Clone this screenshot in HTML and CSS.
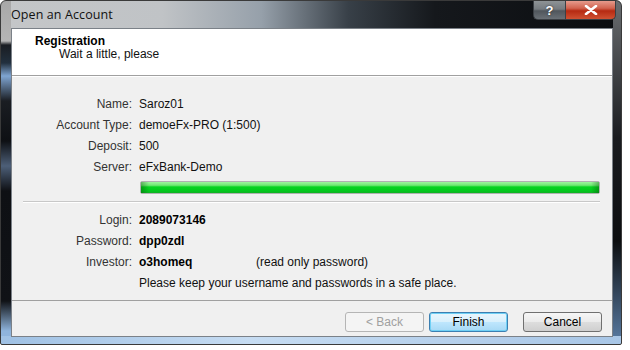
FILE: index.html
```html
<!DOCTYPE html>
<html>
	<head>
		<meta charset="UTF-8">
		<title>Open an Account</title>
		<link rel="stylesheet" href="styles.css">
	</head>
	<body>
		<div class="window">
			<div class="titlebar">
				<span class="title">Open an Account</span>
				<div class="caption-btns">
					<span class="cap help">?</span>
					<span class="cap close">
						<svg width="14" height="10" viewBox="0 0 14 10"><path d="M2 1 L12 9 M12 1 L2 9" stroke="#fff" stroke-width="2.6" stroke-linecap="round"/></svg>
					</span>
				</div>
			</div>
			<div class="client">
				<div class="header">
					<div class="head-title">Registration</div>
					<div class="head-sub">Wait a little, please</div>
				</div>
				<div class="body">
					<div class="info">
						<span class="lbl">Name:</span><span class="val">Saroz01</span>
						<span class="lbl">Account Type:</span><span class="val">demoeFx-PRO (1:500)</span>
						<span class="lbl">Deposit:</span><span class="val">500</span>
						<span class="lbl">Server:</span><span class="val">eFxBank-Demo</span>
					</div>
					<div class="progress"><div class="bar"></div></div>
					<div class="sep"></div>
					<div class="info creds">
						<span class="lbl">Login:</span><span class="val strong">2089073146</span>
						<span class="lbl">Password:</span><span class="val strong">dpp0zdl</span>
						<span class="lbl">Investor:</span><span class="val"><b class="inv">o3homeq</b>(read only password)</span>
						<span class="lbl"></span><span class="val">Please keep your username and passwords in a safe place.</span>
					</div>
				</div>
				<div class="footer">
					<button class="btn" disabled>&lt; Back</button>
					<button class="btn default">Finish</button>
					<button class="btn cancel">Cancel</button>
				</div>
			</div>
		</div>
	</body>
</html>
```

FILE: styles.css
```css
body{
	margin: 0;
	padding: 0;
	background: #fff;
	font-family: "Liberation Sans", Arial, sans-serif;
	font-size: 12px;
	color: #1e1e1e;
}

.window{
	width: 622px;
	height: 345px;
	box-sizing: border-box;
	padding: 0 8px 7px 10px;
	display: flex;
	flex-direction: column;
	border: 1px solid #3a3a3a;
	border-radius: 6px 6px 2px 2px;
	background:
		linear-gradient(90deg, #9fc1e4, #c6dcf2 40%, #a8c6e6) bottom / 100% 8px no-repeat,
		linear-gradient(180deg, #a8a8a8 0, #b5b5b5 40px, #1a1d22 44px, #22303e 62px, #7fa5d2 75px, #1a1d22 100px, #0e1014 140px, #4d5f78 165px, #0e1014 190px, #101216 300px, #8fb4dc 330px) left / 10px 100% no-repeat,
		linear-gradient(180deg, #6a6d70, #1a1c20 40%, #0c0e10 70%, #5a7da5 100%) right / 8px 100% no-repeat,
		linear-gradient(90deg, #c4c6c8 0%, #c0c3c6 26%, #96a0aa 42%, #384048 56%, #15181c 70%, #0b0d10 100%);
}

.titlebar{
	height: 27px;
	display: flex;
	justify-content: space-between;
	align-items: flex-start;
}
.title{
	font-family: "Open Sans", "Liberation Sans", sans-serif;
	font-size: 12.5px;
	color: #111;
	margin-top: 5px;
	letter-spacing: 0.1px;
}
.caption-btns{
	display: flex;
	margin-right: -3px;
}
.cap{
	height: 19px;
	display: flex;
	align-items: center;
	justify-content: center;
	border: 1px solid #3b3f44;
	border-top: 0;
	box-sizing: border-box;
}
.help{
	width: 32px;
	border-radius: 0 0 0 5px;
	border-right: 0;
	background: linear-gradient(180deg, #8e9396 0%, #767b80 45%, #50565c 55%, #6a7076 100%);
	color: #fff;
	font-weight: bold;
	font-size: 13px;
	text-shadow: 0 0 2px #222;
}
.close{
	width: 51px;
	border-radius: 0 0 5px 0;
	background: linear-gradient(180deg, #e69b8c 0%, #d1634f 40%, #b62a12 55%, #cf5132 100%);
}

.client{
	flex: 1;
	display: flex;
	flex-direction: column;
	background: #f0f0f0;
	border: 1px solid #7b8188;
}

.header{
	height: 47px;
	background: #fff;
	border-bottom: 1px solid #a0a0a0;
	box-shadow: 0 1px 0 #fff;
	padding: 5px 0 0 23px;
	box-sizing: border-box;
}
.head-title{
	font-weight: bold;
	color: #000;
	line-height: 14px;
}
.head-sub{
	padding-left: 24px;
	line-height: 12px;
	color: #111;
}

.body{
	flex: 1;
	padding-top: 21px;
}
.info{
	display: grid;
	grid-template-columns: 120px 1fr;
	column-gap: 7px;
	row-gap: 7px;
	line-height: 14px;
}
.lbl{
	text-align: right;
	color: #333;
}
.val{
	color: #111;
}
.strong, .inv{
	font-weight: bold;
	color: #000;
}
.inv{
	display: inline-block;
	width: 117px;
}

.progress{
	margin: 7px 12px 0 128px;
	height: 11px;
	border: 1px solid #b0b0b0;
	border-radius: 2px;
	background: #e6e6e6;
}
.bar{
	height: 100%;
	background:
		linear-gradient(90deg, rgba(0,60,0,0.35), transparent 8px, transparent calc(100% - 8px), rgba(0,60,0,0.35)),
		linear-gradient(180deg, #9ef59e 0%, #6fe872 30%, #06d420 45%, #02c81c 80%, #10b024 100%);
}

.sep{
	margin: 7px 12px 0 11px;
	border-top: 1px solid #c8c8c8;
	border-bottom: 1px solid #fff;
}
.creds{
	margin-top: 10px;
}

.footer{
	height: 36px;
	border-top: 1px solid #a0a0a0;
	display: flex;
	justify-content: flex-end;
	align-items: flex-start;
	padding: 11px 10px 0 0;
	box-sizing: border-box;
	gap: 5px;
}
.btn{
	width: 79px;
	height: 20px;
	font-family: "Liberation Sans", Arial, sans-serif;
	font-size: 12px;
	color: #000;
	border: 1px solid #707070;
	border-radius: 3px;
	background: linear-gradient(180deg, #f6f6f6 0%, #ebebeb 48%, #dddddd 52%, #cfcfcf 100%);
	padding: 0;
}
.btn[disabled]{
	color: #a0a0a0;
	border-color: #b5b5b5;
	background: #f4f4f4;
}
.btn.default{
	border-color: #3c7fb1;
	box-shadow: inset 0 0 0 1px #6fd0f5;
	background: linear-gradient(180deg, #eaf6fd 0%, #d9f0fc 48%, #bee6fd 52%, #a7d9f5 100%);
}
.btn.cancel{
	margin-left: 10px;
}
```
